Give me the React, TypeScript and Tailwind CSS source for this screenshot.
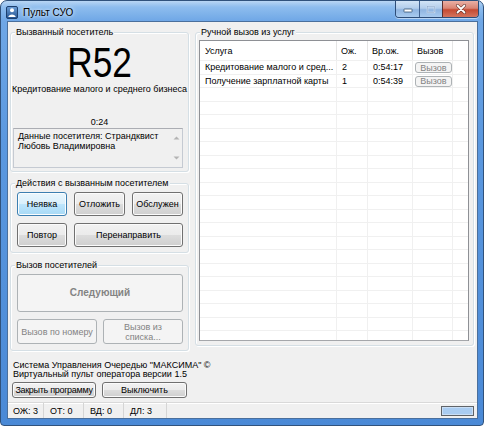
import React from "react";

type BtnState = "normal" | "hot" | "disabled";

const btnStyles: Record<BtnState, string> = {
  normal:
    "border-[#707070] bg-[linear-gradient(180deg,#f2f2f2_0%,#ebebeb_50%,#dddddd_50%,#cfcfcf_100%)] shadow-[inset_0_0_0_1px_#fbfbfb] text-black",
  hot: "border-[#3c7fb1] bg-[linear-gradient(180deg,#eaf6fd_0%,#d9f0fc_50%,#bee6fd_50%,#a7d9f5_100%)] shadow-[inset_0_0_0_1px_#fbfdfe] text-black",
  disabled: "border-[#adb2b5] bg-[#f4f4f4] text-[#838383]",
};

function Button({
  children,
  state = "normal",
  className = "",
}: {
  children: React.ReactNode;
  state?: BtnState;
  className?: string;
}) {
  return (
    <button
      type="button"
      className={`flex shrink-0 items-center justify-center rounded-[3px] border text-center leading-[10px] ${btnStyles[state]} ${className}`}
    >
      {children}
    </button>
  );
}

function GroupBox({
  title,
  className = "",
  children,
}: {
  title: string;
  className?: string;
  children?: React.ReactNode;
}) {
  return (
    <div
      className={`flex shrink-0 flex-col rounded-[3px] border border-[#d5dfe5] shadow-[inset_1px_1px_0_#ffffff,1px_1px_0_#ffffff] ${className}`}
    >
      <div className="-mt-[7px] ml-[4px] w-fit bg-[#f0f0f0] px-[1px] leading-[12px] whitespace-nowrap">
        {title}
      </div>
      {children}
    </div>
  );
}

function AppIcon() {
  return (
    <svg width="12" height="13" viewBox="0 0 12 13">
      <defs>
        <linearGradient id="ico" x1="0" y1="0" x2="0" y2="1">
          <stop offset="0" stopColor="#6d9fd8" />
          <stop offset="1" stopColor="#23528f" />
        </linearGradient>
      </defs>
      <rect x="0.5" y="0.5" width="11" height="12" rx="1.5" fill="url(#ico)" stroke="#1d3f6e" />
      <circle cx="6" cy="4.3" r="2" fill="#ffffff" />
      <path d="M2.3 11 C2.6 7.6 9.4 7.6 9.7 11 Z" fill="#ffffff" />
    </svg>
  );
}

function CaptionButtons() {
  return (
    <div className="flex h-[17px] overflow-hidden rounded-b-[4px] border border-t-0 border-[#2d4d78] shadow-[0_1px_0_rgba(255,255,255,0.5)]">
      <div className="flex w-[24px] items-center justify-center border-r border-[#3f6190] bg-[linear-gradient(180deg,#d2e4f6_0%,#b2cdeb_45%,#8fb4e0_55%,#a8cbef_100%)]">
        <svg width="10" height="8" viewBox="0 0 10 8">
          <rect x="1" y="4" width="8" height="3" rx="0.5" fill="#ffffff" stroke="#34506f" strokeWidth="0.8" />
        </svg>
      </div>
      <div className="flex w-[23px] items-center justify-center border-r border-[#5a3030] bg-[linear-gradient(180deg,#d2e4f6_0%,#b2cdeb_45%,#8fb4e0_55%,#a8cbef_100%)]">
        <svg width="10" height="9" viewBox="0 0 10 9">
          <rect x="1.5" y="1.5" width="7" height="6" fill="none" stroke="#dbe7f5" strokeWidth="1.4" />
          <rect x="1.5" y="1.5" width="7" height="6" fill="none" stroke="#7d9cc2" strokeWidth="0.5" />
        </svg>
      </div>
      <div className="flex w-[35px] items-center justify-center bg-[linear-gradient(180deg,#eab0a5_0%,#da8574_45%,#c54a32_55%,#d4745e_100%)]">
        <svg width="12" height="10" viewBox="0 0 12 10">
          <path d="M2.5 1.5 L9.5 8.5 M9.5 1.5 L2.5 8.5" stroke="#5a2a22" strokeWidth="3" strokeLinecap="round" />
          <path d="M2.5 1.5 L9.5 8.5 M9.5 1.5 L2.5 8.5" stroke="#ffffff" strokeWidth="1.8" strokeLinecap="round" />
        </svg>
      </div>
    </div>
  );
}

function ScrollArrow({ up }: { up: boolean }) {
  return (
    <svg width="7" height="4" viewBox="0 0 7 4">
      <path d={up ? "M0.5 3.5 L3.5 0.5 L6.5 3.5 Z" : "M0.5 0.5 L3.5 3.5 L6.5 0.5 Z"} fill="#b4b4b4" />
    </svg>
  );
}

const services = [
  { name: "Кредитование малого и сред...", wait: "2", time: "0:54:17" },
  { name: "Получение зарплатной карты", wait: "1", time: "0:54:39" },
];

const emptyRows = Array.from({ length: 19 }, (_, i) => i);

function ServiceTable() {
  return (
    <div className="ml-[3px] mt-[2px] h-[301px] w-[270px] overflow-hidden border border-[#8e9095] border-b-[#a5a7ab] bg-white">
      <div className="flex h-[20px] border-b border-[#f0f0f0]">
        <div className="flex w-[137px] items-center border-r border-[#e5e5e5] pl-[5px]">Услуга</div>
        <div className="flex w-[31px] items-center border-r border-[#e5e5e5] pl-[4px]">Ож.</div>
        <div className="flex w-[45px] items-center border-r border-[#e5e5e5] pl-[4px]">Вр.ож.</div>
        <div className="flex w-[40px] items-center border-r border-[#e5e5e5] pl-[4px]">Вызов</div>
        <div className="w-[15px]" />
      </div>
      {services.map((s) => (
        <div key={s.name} className="flex h-[13.5px] border-b border-[#f0f0f0]">
          <div className="flex w-[137px] items-center border-r border-[#f0f0f0] pl-[5px] whitespace-nowrap">{s.name}</div>
          <div className="flex w-[31px] items-center border-r border-[#f0f0f0] pl-[5px]">{s.wait}</div>
          <div className="flex w-[45px] items-center border-r border-[#f0f0f0] pl-[5px]">{s.time}</div>
          <div className="flex w-[40px] items-start border-r border-[#f0f0f0] pl-[2px] pt-[1px]">
            <Button state="disabled" className="h-[11px] w-[37px] text-[9px]">
              Вызов
            </Button>
          </div>
          <div className="w-[15px]" />
        </div>
      ))}
      {emptyRows.map((i) => (
        <div key={i} className="flex h-[13.5px] border-b border-[#f0f0f0]">
          <div className="w-[137px] border-r border-[#f0f0f0]" />
          <div className="w-[31px] border-r border-[#f0f0f0]" />
          <div className="w-[45px] border-r border-[#f0f0f0]" />
          <div className="w-[40px] border-r border-[#f0f0f0]" />
          <div className="w-[15px]" />
        </div>
      ))}
    </div>
  );
}

function StatusBar() {
  return (
    <div className="flex h-[16px] items-center border-t border-[#d9d9d9] shadow-[inset_0_1px_0_#ffffff]">
      <div className="flex h-full w-[35px] items-center pl-[5px]">ОЖ: 3</div>
      <div className="flex h-full w-[40px] items-center border-l border-[#d5d5d5] pl-[6px]">ОТ: 0</div>
      <div className="flex h-full w-[40px] items-center border-l border-[#d5d5d5] pl-[6px]">ВД: 0</div>
      <div className="flex h-full w-[43px] items-center border-l border-[#d5d5d5] pl-[6px]">ДЛ: 3</div>
      <div className="h-full border-l border-[#d5d5d5]" />
      <div className="ml-auto mr-[3px] h-[10px] w-[33px] border border-[#5f6368] bg-[#a9ccf1] shadow-[inset_0_0_0_1px_#c9def5]" />
    </div>
  );
}

export default function App() {
  return (
    <div className="h-[426px] w-[484px] bg-white font-['Liberation_Sans',Arial,sans-serif] text-[9px] leading-[12px] text-black">
      <div className="flex h-full w-full flex-col rounded-t-[7px] rounded-b-[4px] border border-[#30527c] bg-[linear-gradient(180deg,#b9d6f4_0px,#8ebdee_6px,#6fa7e6_20px,#5b98df_140px,#4a89d6_426px)] pb-[6px] pl-[6px] pr-[5px]">
        {/* caption */}
        <div className="flex h-[20px] shrink-0 items-start">
          <div className="ml-[-1px] mt-[5px]">
            <AppIcon />
          </div>
          <div className="ml-[5px] mt-[6px] text-[10px] leading-[12px] text-black [text-shadow:0_0_6px_#e6f0fb,0_0_3px_#e6f0fb]">
            Пульт СУО
          </div>
          <div className="ml-auto mr-[-1px]">
            <CaptionButtons />
          </div>
        </div>

        {/* client area */}
        <div className="flex h-[398px] flex-col border border-[#4a6f9c] bg-[#f0f0f0]">
          <div className="flex h-[380px] shrink-0 pl-[2px]">
            {/* left column */}
            <div className="flex w-[179px] shrink-0 flex-col">
              <GroupBox title="Вызванный посетитель" className="mt-[10px] h-[140px]">
                <div className="mt-[5px] flex justify-center text-[42px] leading-[40px]">
                  <span className="inline-block scale-x-[0.84]">R52</span>
                </div>
                <div className="text-center leading-[12px] whitespace-nowrap">
                  Кредитование малого и среднего бизнеса
                </div>
                <div className="mt-[21px] text-center leading-[12px]">0:24</div>
                <div className="ml-[2px] flex h-[40px] w-[170px] border border-[#c5cad2] border-t-[#abadb3] bg-[#f0f0f0]">
                  <div className="flex-1 pl-[4px] pt-[2px] leading-[10px]">
                    Данные посетителя: Страндквист
                    <br />
                    Любовь Владимировна
                  </div>
                  <div className="flex w-[12px] flex-col items-center justify-between py-[7px]">
                    <ScrollArrow up />
                    <ScrollArrow up={false} />
                  </div>
                </div>
              </GroupBox>

              <GroupBox title="Действия с вызванным посетителем" className="mt-[11px] h-[70px]">
                <div className="mt-[3px] flex gap-[7px] pl-[6px]">
                  <Button state="hot" className="h-[24px] w-[50px]">
                    Неявка
                  </Button>
                  <Button className="h-[24px] w-[51px]">Отложить</Button>
                  <Button className="h-[24px] w-[51px]">Обслужен</Button>
                </div>
                <div className="mt-[7px] flex gap-[7px] pl-[6px]">
                  <Button className="h-[24px] w-[50px]">Повтор</Button>
                  <Button className="h-[24px] w-[109px]">Перенаправить</Button>
                </div>
              </GroupBox>

              <GroupBox title="Вызов посетителей" className="mt-[12px] h-[86px]">
                <div className="mt-[3px] pl-[6px]">
                  <Button state="disabled" className="h-[38px] w-[166px] text-[10px] font-bold">
                    Следующий
                  </Button>
                </div>
                <div className="mt-[7px] flex gap-[6px] pl-[6px]">
                  <Button state="disabled" className="h-[25px] w-[80px] whitespace-nowrap">
                    Вызов по номеру
                  </Button>
                  <Button state="disabled" className="h-[25px] w-[80px]">
                    Вызов из
                    <br />
                    списка...
                  </Button>
                </div>
              </GroupBox>

              <div className="ml-[3px] mt-[10px] leading-[9px] whitespace-nowrap">
                Система Управления Очередью "МАКСИМА" ©
                <br />
                Виртуальный пульт оператора версии 1.5
              </div>
              <div className="ml-[2px] mt-[3px] flex gap-[6px]">
                <Button className="h-[16px] w-[84px] whitespace-nowrap tracking-[-0.3px]">Закрыть программу</Button>
                <Button className="h-[16px] w-[85px] whitespace-nowrap">Выключить</Button>
              </div>
            </div>

            {/* right column */}
            <GroupBox title="Ручной вызов из услуг" className="ml-[6px] mt-[10px] h-[314px] w-[279px]">
              <ServiceTable />
            </GroupBox>
          </div>
          <StatusBar />
        </div>
      </div>
    </div>
  );
}
